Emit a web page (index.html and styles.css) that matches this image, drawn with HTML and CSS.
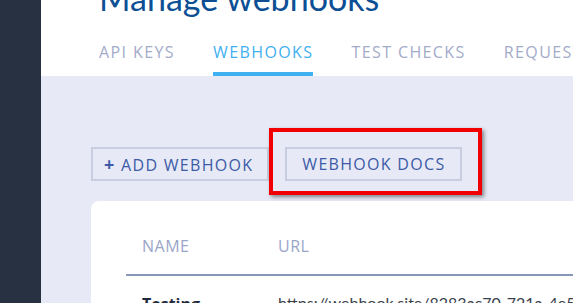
FILE: index.html
```html
<!DOCTYPE html>
<html lang="en">
<head>
    <meta charset="UTF-8">
    <meta name="viewport" content="width=device-width, initial-scale=1.0">
    <title>Manage webhooks</title>
    <link rel="stylesheet" href="styles.css">
</head>
<body>
    <div class="sidebar"></div>

    <div class="main">
        <div class="top">
            <h1 class="title">Manage webhooks</h1>
            <div class="tabs">
                <a class="tab">API KEYS</a>
                <a class="tab active">WEBHOOKS</a>
                <a class="tab">TEST CHECKS</a>
                <a class="tab">REQUESTS</a>
            </div>
        </div>

        <div class="content">
            <div class="actions">
                <button type="button" class="btn btn-add"><span class="plus">+</span> ADD WEBHOOK</button>
                <div class="highlight-wrap">
                    <button type="button" class="btn">WEBHOOK DOCS</button>
                    <div class="highlight"></div>
                </div>
            </div>

            <div class="card">
                <div class="row head">
                    <div class="cell">NAME</div>
                    <div class="cell">URL</div>
                </div>
                <div class="row">
                    <div class="cell name">Testing</div>
                    <div class="cell url">https://webhook.site/8283ac70-721a-4e5b-9c1d-2f3a</div>
                </div>
            </div>
        </div>
    </div>
</body>
</html>
```

FILE: styles.css
```css
body {
    margin: 0;
    padding: 0;
    display: flex;
    height: 303px;
    overflow: hidden;
    background-color: #e7eaf6;
    font-family: "Open Sans", "Liberation Sans", sans-serif;
}
.sidebar {
    width: 41px;
    flex-shrink: 0;
    background-color: #273142;
}
.main {
    flex: 1;
    min-width: 0;
    overflow: hidden;
}
.top {
    background-color: #fff;
    padding-left: 58px;
}
.title {
    margin: -22px 0 0 0;
    font-family: "Lato", "Open Sans", sans-serif;
    font-weight: 400;
    font-size: 34px;
    line-height: 40px;
    color: #0d4f95;
    white-space: nowrap;
}
.tabs {
    display: flex;
    gap: 38px;
    margin-top: 23px;
    white-space: nowrap;
}
.tab {
    font-size: 16px;
    line-height: 22px;
    letter-spacing: 1.4px;
    color: #a3abc9;
    padding-bottom: 9px;
    border-bottom: 4px solid transparent;
}
.tab.active {
    color: #3fb0f0;
    border-bottom-color: #3fb0f0;
}
.content {
    padding: 71px 0 0 50px;
}
.actions {
    display: flex;
    gap: 16px;
}
.btn {
    height: 34px;
    padding: 0 15px;
    background: transparent;
    border: 2px solid #c9cde0;
    font-family: "Open Sans", "Liberation Sans", sans-serif;
    font-size: 16px;
    letter-spacing: 1.3px;
    color: #3c5aa6;
    white-space: nowrap;
}
.btn-add {
    padding: 0 14px 0 11px;
}
.plus {
    font-weight: 700;
    font-size: 18px;
}
.highlight-wrap {
    position: relative;
}
.highlight {
    position: absolute;
    left: -16px;
    right: -20px;
    top: -19px;
    bottom: -14px;
    border: 4px solid #f20000;
    box-shadow: 2px 2px 4px rgba(0, 0, 0, 0.45);
    pointer-events: none;
}
.card {
    margin-top: 20px;
    background-color: #fff;
    border-radius: 8px 0 0 0;
    padding: 0 0 0 35px;
    height: 200px;
}
.row {
    display: grid;
    grid-template-columns: 136px 1fr;
    padding-left: 16px;
    white-space: nowrap;
    font-size: 16px;
}
.row.head {
    padding-top: 34px;
    padding-bottom: 17px;
    border-bottom: 2px solid #8896b8;
    color: #9aa6c8;
    letter-spacing: 0.5px;
}
.row + .row {
    padding-top: 17px;
}
.cell {
    overflow: hidden;
}
.name {
    font-weight: 700;
    color: #1e2a3c;
}
.url {
    font-family: "Lato", "Open Sans", sans-serif;
    color: #3a3f4c;
}
```
